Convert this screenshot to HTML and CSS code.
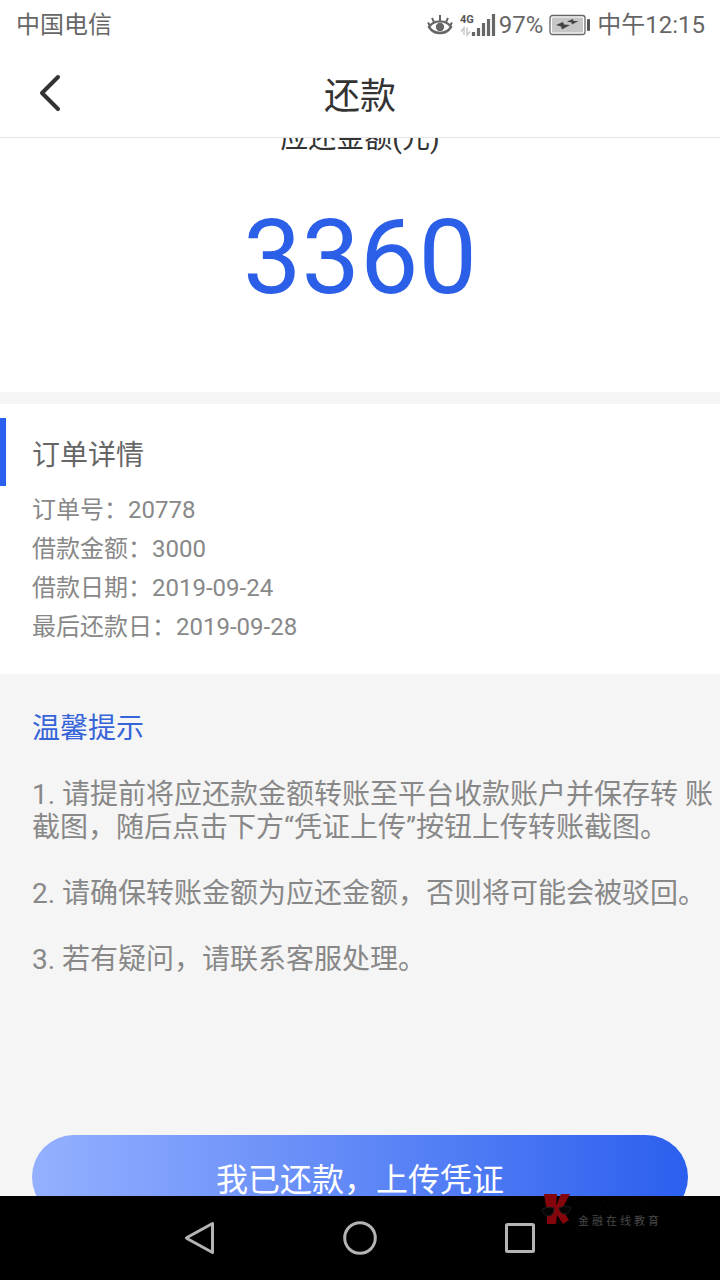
FILE: index.html
```html
<!DOCTYPE html>
<html lang="zh-CN">
<head>
    <meta charset="UTF-8">
    <meta name="viewport" content="width=device-width, initial-scale=1.0">
    <title>还款</title>
    <link rel="stylesheet" href="styles.css">
</head>
<body>

<div class="status-bar">
    <span>中国电信</span>
    <div class="status-right">
        <svg class="icon-eye" width="26" height="24" viewBox="0 0 26 24" fill="none" stroke="#666" stroke-width="2.4">
            <path d="M2 14C7 6.500 19 6.500 24 14C19 22 7 22 2 14Z"/>
            <path d="M13 8V2M7 9L5 5M19 9L21 5M3 13L1 9.500M23 13L25 9.500" stroke-width="2"/>
            <circle cx="13" cy="14" r="4.200" fill="#666" stroke="none"/>
        </svg>
        <svg class="icon-signal" width="36" height="24" viewBox="0 0 36 24">
            <text x="0" y="10" class="signal-type">4G</text>
            <path d="M4 22V15L1 18.500M7 14.500V22L10 18.500" fill="none" stroke="#c4c4c4" stroke-width="1.400"/>
            <path d="M13.500 19V23M18.500 15V23M23.500 10V23M28.500 6V23M33.500 1V23" stroke="#666" stroke-width="3.200"/>
        </svg>
        <span>97%</span>
        <svg class="icon-battery" width="42" height="22" viewBox="0 0 42 22">
            <rect x="1" y="1.500" width="35" height="19" rx="2.500" fill="#fff" stroke="#666" stroke-width="1.300"/>
            <rect x="3" y="3.500" width="31" height="15" fill="#c6c6c6"/>
            <path d="M7 11L14 8L15 10.500L21 11L13 15.500L12 12.500ZM18 7.500L24 5L24.500 7L29.500 7L23 10.500L22.500 8.500Z" fill="#444"/>
            <rect x="38" y="5" width="3" height="12" rx="1" fill="#555"/>
        </svg>
        <span>中午12:15</span>
    </div>
</div>

<header class="title-bar">
    <button class="back-button" aria-label="返回">
        <svg width="24" height="38" viewBox="0 0 24 38" fill="none" stroke="#333" stroke-width="4" stroke-linecap="round" stroke-linejoin="round">
            <path d="M20 2L4 18L20 34"/>
        </svg>
    </button>
    <h1>还款</h1>
</header>

<main class="content">
    <section class="amount">
        <div class="amount-label">应还金额(元)</div>
        <div class="amount-value">3360</div>
    </section>

    <section class="order">
        <h2 class="order-title">订单详情</h2>
        <dl class="order-list">
            <div><dt>订单号：</dt><dd>20778</dd></div>
            <div><dt>借款金额：</dt><dd>3000</dd></div>
            <div><dt>借款日期：</dt><dd>2019-09-24</dd></div>
            <div><dt>最后还款日：</dt><dd>2019-09-28</dd></div>
        </dl>
    </section>

    <section class="tips">
        <h2 class="tips-title">温馨提示</h2>
        <p>1. 请提前将应还款金额转账至平台收款账户并保存转 账截图，随后点击下方“凭证上传”按钮上传转账截图。</p>
        <p>2. 请确保转账金额为应还金额，否则将可能会被驳回。</p>
        <p>3. 若有疑问，请联系客服处理。</p>
    </section>

    <div class="submit">
        <button class="submit-button">我已还款，上传凭证</button>
    </div>
</main>

<nav class="nav-bar">
    <button aria-label="返回">
        <svg width="36" height="36" viewBox="0 0 36 36"><path d="M30.500 3.500V32.500L5 18.500Q4 18 5 17.500Z"/></svg>
    </button>
    <button aria-label="主页">
        <svg width="36" height="36" viewBox="0 0 36 36"><circle cx="18" cy="18" r="15.300"/></svg>
    </button>
    <button aria-label="最近任务">
        <svg width="36" height="36" viewBox="0 0 36 36"><rect x="4.500" y="4.500" width="27" height="27" rx="1"/></svg>
    </button>
    <div class="watermark">
        <svg width="32" height="34" viewBox="0 0 32 34">
            <path d="M3 2H16L15 14L20 2H29L21 17L28 28L22 32L16 23L15 32H6V23L5 14Z" fill="#84060c"/>
            <path d="M1 17Q7 14 13 16Q13 23 8 24Q2 24 1 17ZM18 16Q23 13 30 15Q29 21 24 22Q19 22 18 16Z" fill="#050505"/>
            <path d="M1 17Q7 14 13 16Q13 23 8 24Q2 24 1 17ZM18 16Q23 13 30 15Q29 21 24 22Q19 22 18 16Z" fill="none" stroke="#1c1c1c"/>
        </svg>
        <div class="watermark-text">
            <span class="watermark-name">卡农社区</span>
            <span class="watermark-sub">金融在线教育</span>
        </div>
    </div>
</nav>

</body>
</html>
```

FILE: styles.css
```css
* {
    box-sizing: border-box;
}
body {
    display: flex;
    flex-direction: column;
    height: 100vh;
    margin: 0;
    font-family: Roboto, "Noto Sans CJK SC", sans-serif;
    color: #333;
    background-color: #f5f5f5;
    overflow: hidden;
}
h1, h2, p, dl, dd {
    margin: 0;
    font-weight: normal;
}
button {
    padding: 0;
    border: none;
    background: none;
    font-family: inherit;
    cursor: pointer;
}
svg {
    display: block;
    overflow: visible;
}

/* 状态栏 */
.status-bar {
    display: flex;
    justify-content: space-between;
    align-items: center;
    height: 50px;
    padding: 0 15px 0 16px;
    font-size: 24px;
    line-height: 28px;
    color: #666;
    background-color: #fff;
}
.status-right {
    display: flex;
    align-items: center;
}
.icon-eye {
    margin-right: 7px;
}
.icon-signal {
    margin-right: 3px;
}
.icon-battery {
    margin: 0 6px;
}
.signal-type {
    font-family: Roboto, sans-serif;
    font-size: 11px;
    font-weight: bold;
    fill: #555;
}

/* 标题栏 */
.title-bar {
    display: grid;
    grid-template-columns: 100px 1fr 100px;
    align-items: center;
    height: 88px;
    background-color: #fff;
    border-bottom: 1px solid #e6e6e6;
}
.back-button {
    display: flex;
    padding-left: 38px;
}
.title-bar h1 {
    padding-top: 6px;
    font-size: 36px;
    line-height: 42px;
    text-align: center;
}

.content {
    flex: 1;
    min-height: 0;
    overflow: hidden;
}

/* 应还金额 */
.amount {
    margin-top: -16px;
    padding-bottom: 74px;
    text-align: center;
    background-color: #fff;
}
.amount-label {
    font-size: 28px;
    line-height: 34px;
}
.amount-value {
    padding-top: 42px;
    font-size: 104px;
    line-height: 120px;
    color: #2b5fe8;
}

/* 订单详情 */
.order {
    margin-top: 12px;
    padding: 14px 0 27px;
    background-color: #fff;
}
.order-title {
    padding: 8px 0 0 26px;
    border-left: 6px solid #2b5fee;
    font-size: 28px;
    line-height: 60px;
    color: #666;
}
.order-list {
    padding: 5px 32px 0;
    font-size: 24px;
    line-height: 39px;
    color: #888;
}
.order-list div {
    display: flex;
}

/* 温馨提示 */
.tips {
    padding: 38px 0 0 32px;
    font-size: 28px;
    line-height: 33px;
    color: #888;
}
.tips-title {
    font-size: 28px;
    color: #3565d8;
}
.tips p {
    margin-top: 33px;
}

.submit {
    padding: 159px 32px 32px;
}
.submit-button {
    width: 100%;
    height: 84px;
    border-radius: 42px;
    font-size: 32px;
    color: #fff;
    background: linear-gradient(to right, #94b0ff, #2b5fee);
}

/* 底部导航 */
.nav-bar {
    position: relative;
    display: flex;
    justify-content: center;
    height: 84px;
    background-color: #000;
}
.nav-bar button {
    display: flex;
    justify-content: center;
    align-items: center;
    width: 160px;
}
.nav-bar button svg {
    fill: none;
    stroke: #b4b4b4;
    stroke-width: 3;
    stroke-linejoin: round;
}

/* 水印 */
.watermark {
    position: absolute;
    top: -4px;
    right: 58px;
    display: flex;
    gap: 5px;
    pointer-events: none;
}
.watermark-text {
    display: flex;
    flex-direction: column;
    padding-top: 4px;
}
.watermark-name {
    font-size: 18px;
    line-height: 20px;
    color: #030303;
}
.watermark-sub {
    font-size: 11px;
    line-height: 12px;
    letter-spacing: 3px;
    color: #4a4a4a;
}
```
